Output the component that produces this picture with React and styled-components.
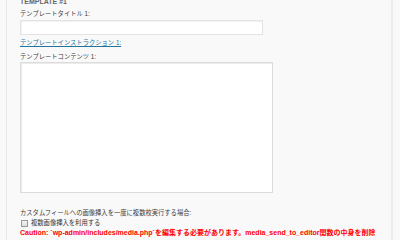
import React from "react";
import styled, { createGlobalStyle } from "styled-components";

const Global = createGlobalStyle`
  html, body {
    margin: 0;
    padding: 0;
    background: #f9f9f9;
    overflow: hidden;
  }
  body {
    font-family: "Liberation Sans", "Noto Sans CJK JP", sans-serif;
  }
`;

const Panel = styled.div`
  margin-left: 6px;
  width: 387px;
  height: 240px;
  border-left: 1px solid #e6e6e6;
  border-right: 2px solid #ececec;
  padding-left: 13px;
  box-sizing: border-box;
  overflow: hidden;
  font-size: 6.3px;
  line-height: 8px;
`;

const Heading = styled.h4`
  margin: -2px 0 0;
  font-size: 7px;
  line-height: 8px;
  font-weight: bold;
  color: #666;
  text-transform: uppercase;
`;

const Label = styled.div`
  margin-top: ${(p) => p.$gap || 0}px;
  font-size: 6.3px;
  line-height: 8px;
  color: #3a3a3a;
  white-space: nowrap;
`;

const Link = styled.a`
  display: block;
  width: max-content;
  margin-top: 4px;
  font-size: 6.3px;
  line-height: 8px;
  color: #21759b;
  text-decoration: underline;
  white-space: nowrap;
`;

const TextInput = styled.div`
  margin-top: 2px;
  width: 243px;
  height: 15px;
  box-sizing: border-box;
  background: #fff;
  border: 1px solid #e3e3e3;
  box-shadow: inset 1px 1px 0 #f2f2f2;
`;

const TextArea = styled.div`
  margin-top: 1px;
  width: 253px;
  height: 131px;
  box-sizing: border-box;
  background: #fff;
  border: 1px solid #dcdcdc;
  box-shadow: inset 1px 1px 0 #ececec;
`;

const CheckRow = styled.label`
  display: flex;
  align-items: center;
  gap: 3px;
  margin-top: 2px;
  height: 8px;
  font-size: 6.3px;
  line-height: 8px;
  color: #333;
  white-space: nowrap;
`;

const Box = styled.span`
  display: inline-block;
  margin-left: 1px;
  width: 7px;
  height: 7px;
  box-sizing: border-box;
  border: 1px solid #9a9a9a;
  background: linear-gradient(#f4f4f4, #dedede);
`;

const Caution = styled.div`
  margin-top: 2px;
  font-size: 7px;
  line-height: 8px;
  font-weight: bold;
  color: #f00;
  white-space: nowrap;
`;

export default function App() {
  return (
    <>
      <Global />
      <Panel>
        <Heading>Template #1</Heading>
        <Label $gap={4}>テンプレートタイトル 1:</Label>
        <TextInput />
        <Link href="#">テンプレートインストラクション 1:</Link>
        <Label $gap={6}>テンプレートコンテンツ 1:</Label>
        <TextArea />
        <Label $gap={16}>カスタムフィールへの画像挿入を一度に複数枚実行する場合:</Label>
        <CheckRow>
          <Box />
          複数画像挿入を利用する
        </CheckRow>
        <Caution>
          Caution: `wp-admin/includes/media.php`を編集する必要があります。media_send_to_editor関数の中身を削除
        </Caution>
      </Panel>
    </>
  );
}
